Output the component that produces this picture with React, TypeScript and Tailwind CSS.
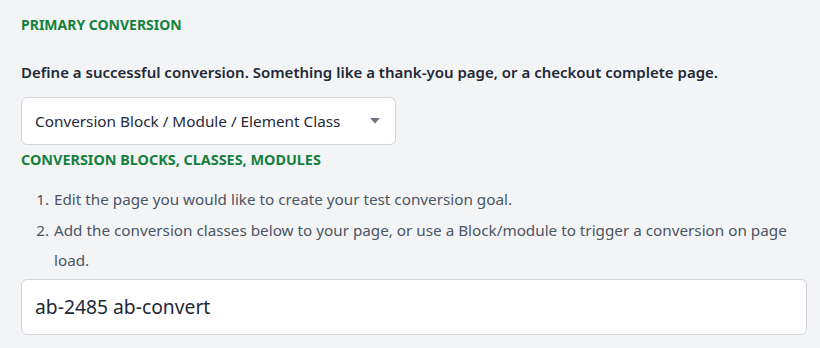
import React from 'react';

const steps = [
  'Edit the page you would like to create your test conversion goal.',
  'Add the conversion classes below to your page, or use a Block/module to trigger a conversion on page load.',
];

const App = () => {
  return (
    <div
      className="min-h-[348px] w-[820px] bg-[#f3f4f6] px-[21px] pt-[16px]"
      style={{ fontFamily: '"Noto Sans", "Open Sans", sans-serif' }}
    >
      <h3 className="text-[14px] font-bold uppercase leading-[18px] text-[#15803d]">
        Primary Conversion
      </h3>
      <p className="mt-[27px] text-[15px] font-semibold leading-[22px] text-[#1f2937]">
        Define a successful conversion. Something like a thank-you page, or a checkout complete page.
      </p>
      <div className="mt-[14px] flex h-[48px] w-[375px] items-center justify-between rounded-md border border-[#d1d5db] bg-white pl-[13px] pr-[15px]">
        <span className="text-[15.3px] text-[#1f2937]">Conversion Block / Module / Element Class</span>
        <svg width="10" height="6" viewBox="0 0 10 6">
          <path d="M0 0h10L5 5.5z" fill="#6b7280" />
        </svg>
      </div>
      <h4 className="mt-[6px] text-[14.4px] font-bold uppercase leading-[18px] text-[#15803d]">
        Conversion Blocks, Classes, Modules
      </h4>
      <ol className="mt-[15px] list-decimal pl-[32px] pr-[10px] text-[15.25px] leading-[30px] text-[#4b5563]">
        {steps.map((s, i) => (
          <li key={s} className={i > 0 ? 'mt-[1px] pl-[1px]' : 'pl-[1px]'}>
            {s}
          </li>
        ))}
      </ol>
      <div className="mt-[4px] flex h-[56px] w-[786px] items-center rounded-md border border-[#d1d5db] bg-white px-[13px]">
        <span className="text-[19.3px] text-[#1f2937]">ab-2485 ab-convert</span>
      </div>
    </div>
  );
};

export default App;
